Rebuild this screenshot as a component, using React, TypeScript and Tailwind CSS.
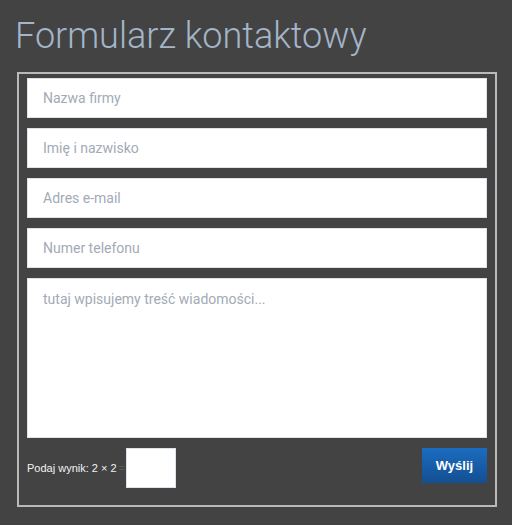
import React from "react";

export default function App() {
  const inputCls =
    "block w-full h-[40px] bg-white border border-[#dde3ea] px-[15px] text-[14px] text-[#555] placeholder:text-[#a3aab6] outline-none";
  return (
    <div
      className="w-[512px] h-[525px] bg-[#434343] pt-[14px] pl-[17px] pr-[15px]"
      style={{ fontFamily: "Roboto, 'Noto Sans', sans-serif" }}
    >
      <h1 className="text-[36px] font-light leading-[44px] text-[#a3b5c9] ml-[-2px]">
        Formularz kontaktowy
      </h1>
      <div className="mt-[14px] w-[480px] h-[435px] border-2 border-[#b9b9b9] px-[8px] pt-[4px]">
        <div className="flex flex-col gap-[10px]">
          <input className={inputCls} placeholder="Nazwa firmy" />
          <input className={inputCls} placeholder="Imię i nazwisko" />
          <input className={inputCls} placeholder="Adres e-mail" />
          <input className={inputCls} placeholder="Numer telefonu" />
          <textarea
            className="block w-full h-[160px] resize-none bg-white border border-[#dde3ea] px-[15px] py-[10px] text-[14px] text-[#555] placeholder:text-[#a3aab6] outline-none"
            placeholder="tutaj wpisujemy treść wiadomości..."
          />
        </div>
        <div className="flex items-start justify-between mt-[10px]">
          <div
            className="flex items-center"
            style={{ fontFamily: "'Liberation Sans', Arial, sans-serif" }}
          >
            <span className="text-[11px] text-[#f2f2f2] mt-[1px]">Podaj wynik: 2 × 2</span>
            <span className="text-[11px] text-[#5a5a5a] ml-[2px]">=</span>
            <input className="ml-[1px] w-[50px] h-[40px] bg-white border border-[#dde3ea] outline-none" />
          </div>
          <button
            className="w-[65px] h-[35px] text-white text-[13px] font-bold bg-gradient-to-b from-[#1b6cc0] to-[#144f92]"
            style={{ fontFamily: "'Liberation Sans', Arial, sans-serif" }}
          >
            Wyślij
          </button>
        </div>
      </div>
    </div>
  );
}
